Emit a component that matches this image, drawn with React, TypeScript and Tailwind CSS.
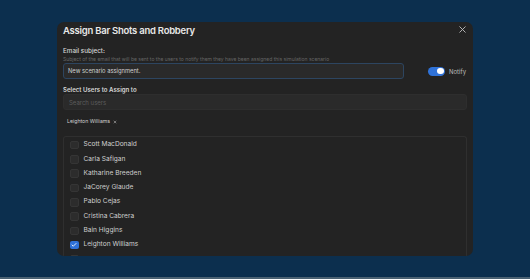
import { X, Check } from "lucide-react";

const users = [
  "Scott MacDonald",
  "Carla Safigan",
  "Katharine Breeden",
  "JaCorey Glaude",
  "Pablo Cejas",
  "Cristina Cabrera",
  "Bain Higgins",
  "Leighton Williams",
  "Scott Keele",
];

const selected = ["Leighton Williams"];

export default function App() {
  return (
    <div
      className="w-[530px] h-[279px] bg-[#0c2f4e] overflow-hidden flex flex-col"
      style={{ fontFamily: "Inter, 'Noto Sans', sans-serif" }}
    >
      <div className="flex-1 pt-[22px] px-[57px]">
        {/* dialog */}
        <div className="w-[416px] h-[234px] bg-[#232323] rounded-[7px] overflow-hidden px-[6px] pt-[3px] flex flex-col">
          <div className="shrink-0 flex items-center justify-between h-[12px]">
            <h2 className="text-[9.5px] font-semibold text-[#e8e8e8] tracking-[-0.25px] leading-[12px]">
              Assign Bar Shots and Robbery
            </h2>
            <X className="w-[11px] h-[11px] text-[#bdbdbd] -mr-[0.5px] -mt-[3px]" strokeWidth={2} />
          </div>

          {/* email subject */}
          <div className="shrink-0 mt-[10px] text-[6.3px] font-medium text-[#d6d6d6] leading-[8px]">Email subject:</div>
          <div className="shrink-0 mt-[1px] text-[5px] text-[#666666] leading-[6px] whitespace-nowrap">
            Subject of the email that will be sent to the users to notify them they have been assigned this simulation scenario
          </div>
          <div className="shrink-0 mt-[1px] flex items-center">
            <div className="w-[341px] h-[16px] rounded-[3px] bg-[#2a2a2a] border border-[#2d4560] flex items-center px-[4px]">
              <span className="text-[5.8px] text-[#cfcfcf]">New scenario assignment.</span>
            </div>
            <div className="ml-[24px] flex items-center gap-[4px]">
              <div className="w-[17px] h-[9px] rounded-full bg-[#2f72d8] flex items-center justify-end px-[1.5px]">
                <div className="w-[6.5px] h-[6.5px] rounded-full bg-white" />
              </div>
              <span className="text-[6px] text-[#bdbdbd]">Notify</span>
            </div>
          </div>

          {/* select users */}
          <div className="shrink-0 mt-[7px] text-[6.1px] font-semibold text-[#d6d6d6] leading-[8px]">Select Users to Assign to</div>
          <div className="shrink-0 h-[16px] rounded-[3px] bg-[#2a2a2a] border border-[#2e2e2e] flex items-center px-[5px]">
            <span className="text-[6px] text-[#5c5c5c]">Search users</span>
          </div>

          <div className="shrink-0 mt-[5px] h-[14px] flex items-center gap-[4px] pl-[4px]">
            {selected.map((s) => (
              <span key={s} className="flex items-center gap-[3px] text-[5.2px] text-[#cfcfcf]">
                {s}
                <X className="w-[4px] h-[4px] text-[#cfcfcf]" strokeWidth={3} />
              </span>
            ))}
          </div>

          <div className="mt-[7px] flex-1 min-h-0 overflow-hidden border border-[#2f2f2f] rounded-t-[3px] border-b-0 pt-[1px] pl-[6px] flex flex-col">
            {users.map((u) => {
              const on = selected.includes(u);
              return (
                <div key={u} className="h-[14.3px] flex items-center gap-[5px] shrink-0">
                  {on ? (
                    <div className="w-[8.5px] h-[8.5px] rounded-[2px] bg-[#2f72d8] flex items-center justify-center">
                      <Check className="w-[6px] h-[6px] text-white" strokeWidth={3.5} />
                    </div>
                  ) : (
                    <div className="w-[8.5px] h-[8.5px] rounded-[2px] bg-[#2c2c2c] border border-[#353535]" />
                  )}
                  <span className="text-[6.6px] text-[#cfcfcf]">{u}</span>
                </div>
              );
            })}
          </div>
        </div>
      </div>
      <div className="h-[2px] bg-[#4b6273]" />
    </div>
  );
}
